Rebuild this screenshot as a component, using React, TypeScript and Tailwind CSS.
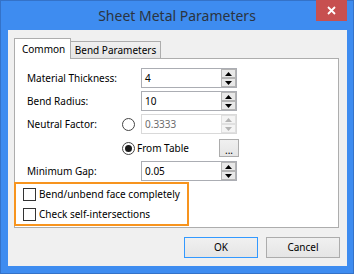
import React from 'react';

function Spinner({ disabled = false }: { disabled?: boolean }) {
  const arrow = disabled ? '#b4b4b4' : '#000000';
  return (
    <div
      className={`flex h-full w-[15px] flex-col border ${
        disabled ? 'border-[#e0e0e0] bg-[#f4f4f4]' : 'border-[#b4b4b4] bg-[#e8e8e8]'
      }`}
    >
      <div className="flex flex-1 items-center justify-center">
        <svg width="7" height="4" viewBox="0 0 7 4">
          <path d="M0 4 L3.5 0 L7 4 Z" fill={arrow} />
        </svg>
      </div>
      <div className={`h-[2px] ${disabled ? 'bg-[#e0e0e0]' : 'bg-[#b4b4b4]'}`} />
      <div className="flex flex-1 items-center justify-center">
        <svg width="7" height="4" viewBox="0 0 7 4">
          <path d="M0 0 L7 0 L3.5 4 Z" fill={arrow} />
        </svg>
      </div>
    </div>
  );
}

function NumberBox({ value, disabled = false }: { value: string; disabled?: boolean }) {
  return (
    <div
      className={`flex h-[20px] w-[96px] items-center border bg-white ${
        disabled ? 'border-[#d9d9d9]' : 'border-[#abadb3]'
      }`}
    >
      <span className={`flex-1 pl-[3px] ${disabled ? 'text-[#6d6d6d]' : 'text-black'}`}>{value}</span>
      <Spinner disabled={disabled} />
    </div>
  );
}

function Radio({ checked = false }: { checked?: boolean }) {
  return (
    <div className="flex h-[13px] w-[13px] flex-shrink-0 items-center justify-center rounded-full border border-[#444] bg-white">
      {checked && <div className="h-[7px] w-[7px] rounded-full bg-[#1a1a1a]" />}
    </div>
  );
}

function CheckRow({ label }: { label: string }) {
  return (
    <div className="flex h-[20px] items-center">
      <div className="ml-[7px] h-[13px] w-[13px] flex-shrink-0 border border-[#333] bg-white" />
      <span className="ml-[3px] whitespace-nowrap">{label}</span>
    </div>
  );
}

export default function App() {
  return (
    <div className="flex h-[274px] w-[354px] flex-col border border-[#3472c8] bg-[#3e8cf0] font-['Segoe_UI','Noto_Sans',sans-serif] text-[10px] text-black">
      {/* Title bar */}
      <div className="relative flex h-[29px] items-center justify-center">
        <span className="text-[14px] leading-none text-[#2b3440]">Sheet Metal Parameters</span>
        <div className="absolute right-[6px] top-[-1px] flex h-[21px] w-[31px] items-center justify-center bg-[#c75050]">
          <svg width="9" height="9" viewBox="0 0 9 9">
            <path d="M1 1 L8 8 M8 1 L1 8" stroke="#ffffff" strokeWidth="1.8" />
          </svg>
        </div>
      </div>

      {/* Client area */}
      <div className="ml-[7px] mr-[6px] flex h-[236px] flex-col bg-[#f0f0f0]">
        {/* Tabs */}
        <div className="ml-[6px] mt-[8px] flex h-[20px] items-end">
          <div className="relative z-10 -mb-px flex h-[21px] w-[57px] items-center border border-b-0 border-[#adadad] bg-white pl-[7px]">
            Common
          </div>
          <div className="flex h-[17px] w-[90px] items-center justify-center border border-b-0 border-l-0 border-[#adadad] bg-gradient-to-b from-[#f0f0f0] to-[#e5e5e5]">
            Bend Parameters
          </div>
        </div>

        {/* Panel */}
        <div className="ml-[6px] flex h-[170px] w-[325px] flex-col border border-[#adadad] bg-white pt-[9px]">
          <div className="flex h-[20px] items-center">
            <span className="w-[126px] pl-[12px]">Material Thickness:</span>
            <NumberBox value="4" />
          </div>
          <div className="mt-[3px] flex h-[20px] items-center">
            <span className="w-[126px] pl-[12px]">Bend Radius:</span>
            <NumberBox value="10" />
          </div>
          <div className="mt-[3px] flex h-[20px] items-center">
            <span className="w-[107px] pl-[12px]">Neutral Factor:</span>
            <Radio />
            <div className="ml-[6px]">
              <NumberBox value="0.3333" disabled />
            </div>
          </div>
          <div className="mt-[5px] flex h-[18px] items-center">
            <div className="ml-[107px]">
              <Radio checked />
            </div>
            <span className="ml-[2px] w-[82px]">From Table</span>
            <div className="flex h-[18px] w-[20px] items-center justify-center border border-[#acacac] bg-gradient-to-b from-[#f0f0f0] to-[#e5e5e5] pt-[3px] leading-none">
              ...
            </div>
          </div>
          <div className="mt-[4px] flex h-[20px] items-center">
            <span className="w-[126px] pl-[12px]">Minimum Gap:</span>
            <NumberBox value="0.05" />
          </div>
          <div className="-ml-px mt-px flex h-[44px] w-[175px] flex-col border-2 border-[#f7941e]">
            <CheckRow label="Bend/unbend face completely" />
            <CheckRow label="Check self-intersections" />
          </div>
        </div>

        {/* Buttons */}
        <div className="mr-[7px] mt-[9px] flex justify-end gap-[8px]">
          <div className="flex h-[21px] w-[74px] items-center justify-center border border-[#3399ff] bg-gradient-to-b from-[#f0f0f0] to-[#e5e5e5]">
            OK
          </div>
          <div className="flex h-[21px] w-[74px] items-center justify-center border border-[#acacac] bg-gradient-to-b from-[#f0f0f0] to-[#e5e5e5]">
            Cancel
          </div>
        </div>
      </div>
    </div>
  );
}
